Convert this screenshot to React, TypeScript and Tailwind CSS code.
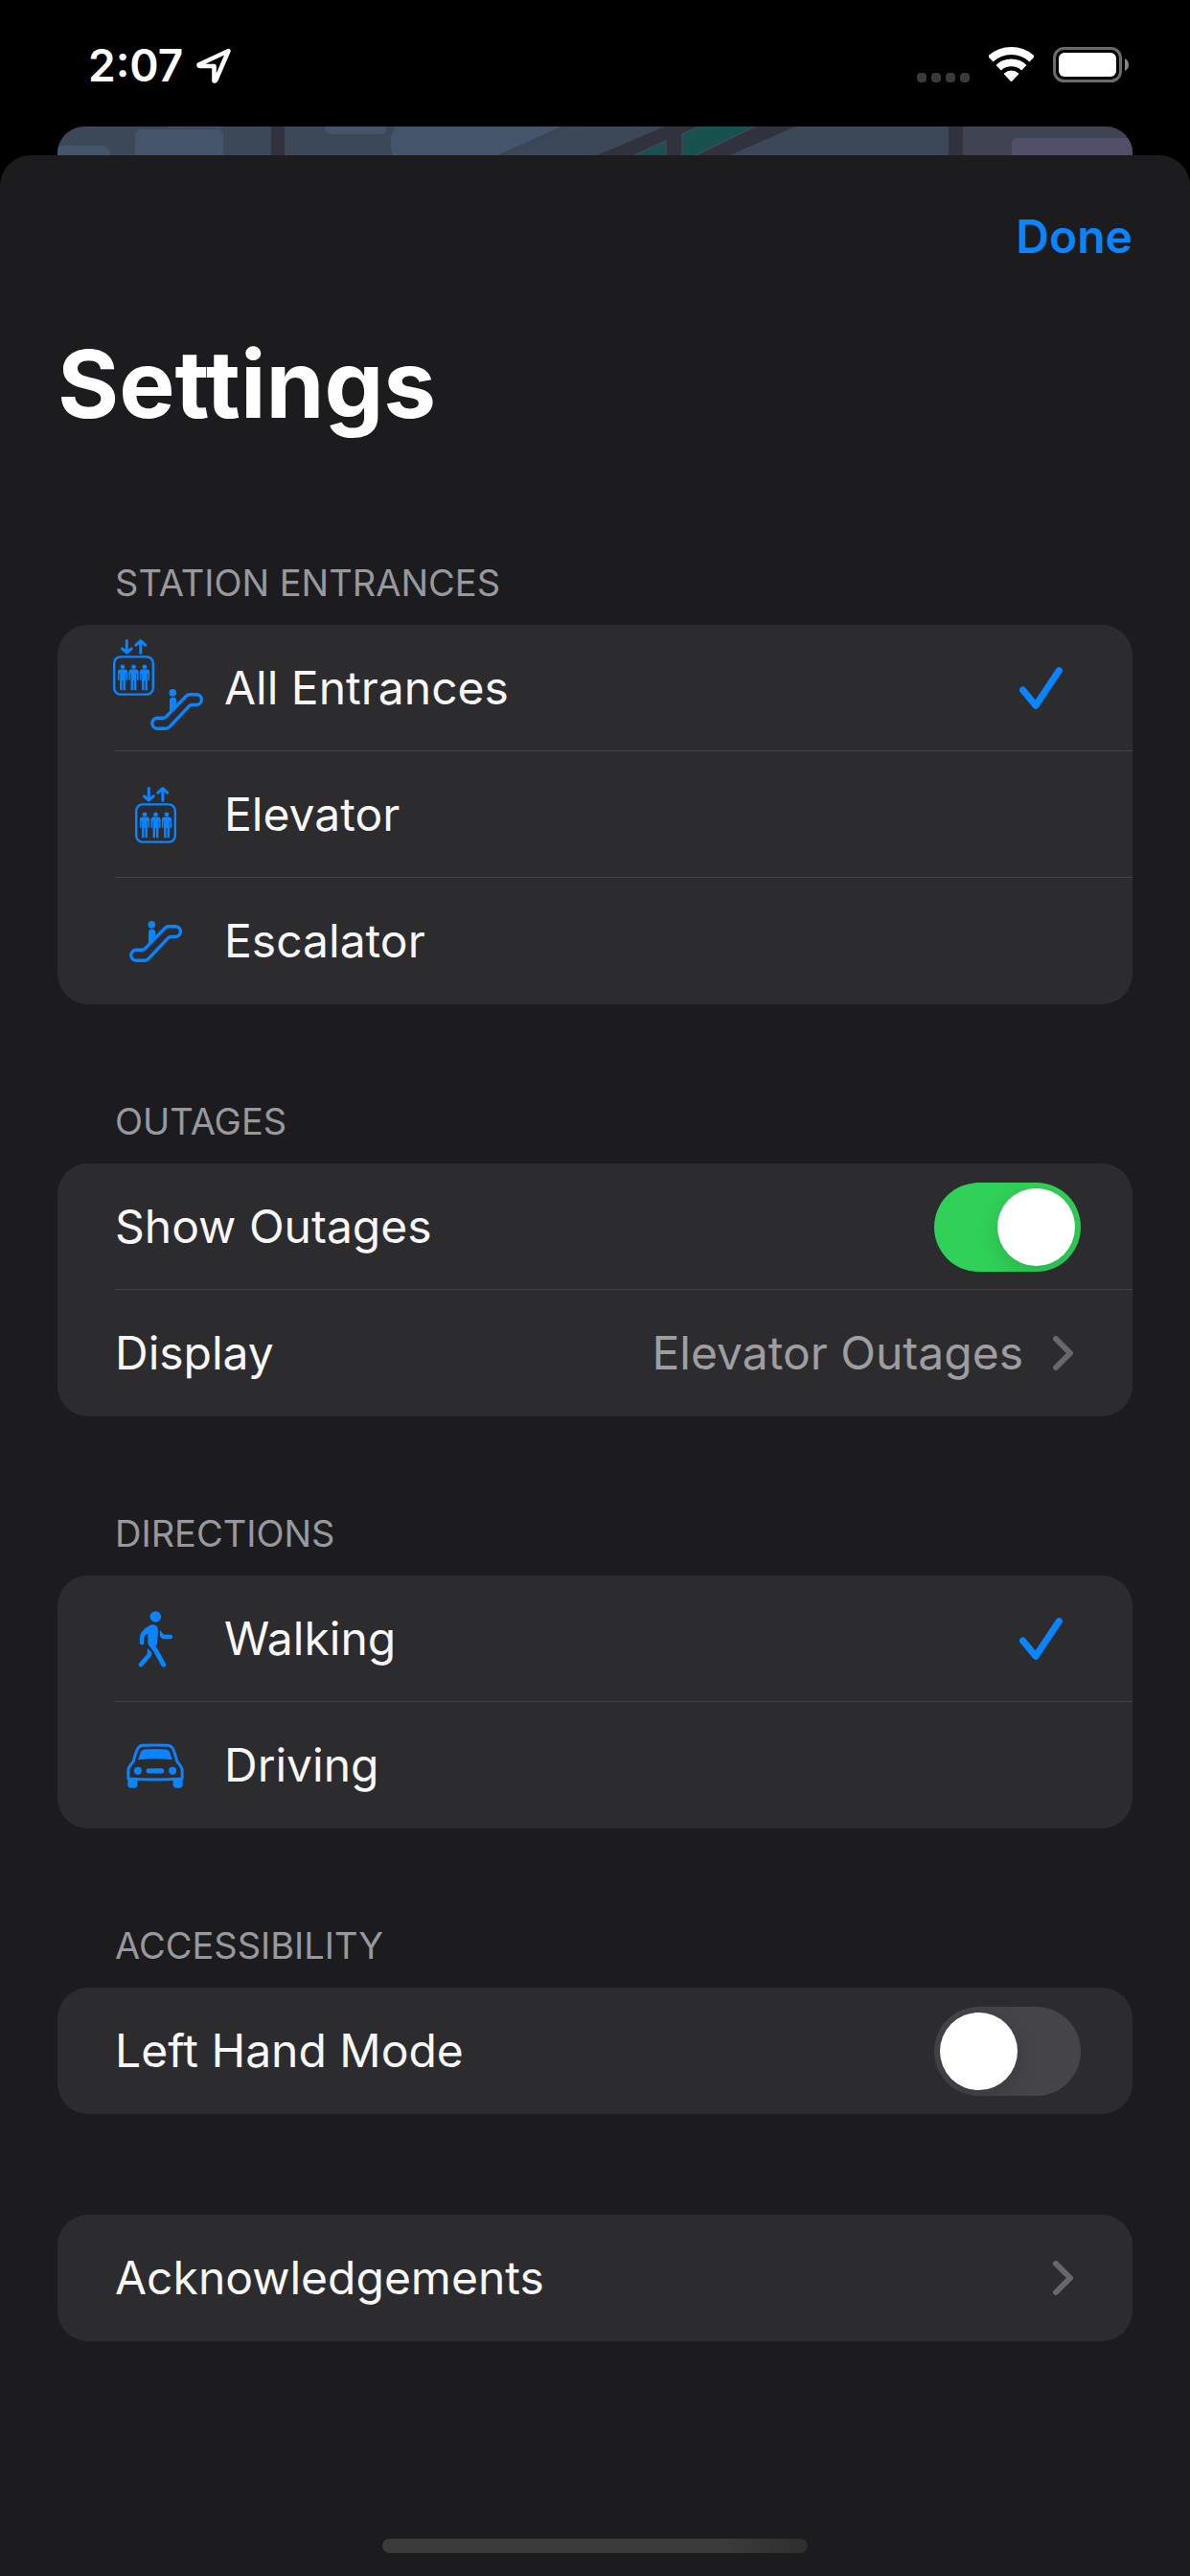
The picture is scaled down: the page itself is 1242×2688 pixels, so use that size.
import React, { useState } from "react";


const ElevatorShape = () => (
    <g>
        <g fill="none" stroke="#0a84ff" strokeWidth="3" strokeLinecap="round" strokeLinejoin="round">
            <path d="M14.3 1.5V14M9.5 9.8L14.3 14.2L19.2 9.8" />
            <path d="M28.8 14.2V2M23.9 6.2L28.8 1.7L33.7 6.2" />
        </g>
        <rect x="1.2" y="18.4" width="40.6" height="39.2" rx="6.5" fill="none" stroke="#0a84ff" strokeWidth="2.4" />
        {[10, 21.5, 33].map((x) => (
            <g key={x} transform={`translate(${x} 0)`} fill="#0a84ff">
                <circle cx="0" cy="28.8" r="2.4" />
                <path d="M-2.5 31.5h5q2.6 0 2.6 2.6v8.6h-1.6v-7h-.6v17.6h-2.4v-10h-1v10h-2.4v-17.6h-.6v7h-1.6v-8.6q0-2.6 2.6-2.6z" />
            </g>
        ))}
    </g>
)

const EscalatorShape = () => (
    <g>
        <circle cx="23.3" cy="3.9" r="3.8" fill="#0a84ff" />
        <path d="M20 12a3.6 3.6 0 0 1 7.2 0v6.5L20 25.5z" fill="#0a84ff" />
        <path
            d="M7.2 30.3H13Q15 30.3 16.4 28.9L37 7.6Q38.8 5.7 41.4 5.7H48a5.4 5.4 0 0 1 0 10.8H43.4Q41.8 16.5 40.6 17.7L20 39.4Q18.2 41.2 15.8 41.2H7.2a5.4 5.4 0 0 1 0-10.9z"
            fill="none"
            stroke="#0a84ff"
            strokeWidth="3.4"
            strokeLinejoin="round"
        />
    </g>
)

const ElevatorIcon = () => (
    <svg className="w-[43px] h-[59px] shrink-0" viewBox="0 0 43 59">
        <ElevatorShape />
    </svg>
)

const EscalatorIcon = () => (
    <svg className="w-[55px] h-[43px] shrink-0" viewBox="0 0 55 43">
        <EscalatorShape />
    </svg>
)

const AllIcon = () => (
    <svg className="w-[100px] h-[102px] shrink-0" viewBox="0 0 100 102">
        <g transform="translate(6 0)"><ElevatorShape /></g>
        <g transform="translate(45 52)"><EscalatorShape /></g>
    </svg>
)

const WalkIcon = () => (
    <svg className="w-[37px] h-[59px] shrink-0" viewBox="130 122 111 177">
        <circle cx="185" cy="140" r="17.5" fill="#0a84ff" />
        <path d="M151 181Q164 165 177 165Q193 166 193 184L191 214Q191 224 187 230L176 238Q162 232 161 222V191L152 201z" fill="#0a84ff" />
        <g fill="none" stroke="#0a84ff" strokeLinecap="round" strokeLinejoin="round">
            <path d="M142 221L143 204Q143 198 147 193L158 181" strokeWidth="14" />
            <path d="M171 226L187 248L210 290" strokeWidth="15" />
            <path d="M166 256Q166 259 163 262L139 290" strokeWidth="14" />
            <path d="M206 200Q208 203 213 203H232" strokeWidth="13" />
        </g>
        <path d="M160 238L174 254L168 266L159 258z" fill="#0a84ff" />
        <path d="M198 181L212 198L207 209L199 202z" fill="#0a84ff" />
    </svg>
)

const CarIcon = () => (
    <svg className="w-[60px] h-[47px] shrink-0" viewBox="98 539 179 140">
        <path
            d="M103.500 649V627Q103.500 616 109 609L117 599Q120 595 121 590L128 567Q134 546 149 545.500Q187 544 226 545.500Q241 546 247 567L254 590Q255 595 258 599L266 609Q271.500 616 271.500 627V649Q187 655 103.500 649z"
            fill="none"
            stroke="#0a84ff"
            strokeWidth="9"
            strokeLinejoin="round"
        />
        <path d="M134 590L142 567Q145 559 153 558Q187 556 222 558Q230 559 233 567L241 590Q187 585 134 590z" fill="#0a84ff" />
        <circle cx="133.500" cy="625" r="12" fill="#0a84ff" />
        <circle cx="241.500" cy="625" r="12" fill="#0a84ff" />
        <rect x="159" y="617" width="56" height="16" rx="8" fill="#0a84ff" />
        <path d="M102 648H132V669Q132 678 123 678H111Q102 678 102 669z" fill="#0a84ff" />
        <path d="M243 648H273V669Q273 678 264 678H252Q243 678 243 669z" fill="#0a84ff" />
    </svg>
)

const Check = () => (
    <svg className="hidden w-[64px] h-[44px] shrink-0 peer-checked:block" viewBox="0 0 64 44">
        <path d="M3.500 24L17 40.300L41.300 3.700" fill="none" stroke="#0a84ff" strokeWidth="7" strokeLinecap="round" strokeLinejoin="round" />
    </svg>
)

const Chevron = () => (
    <svg className="w-8 h-9 shrink-0" viewBox="0 0 32 36">
        <path d="M6 3L21 18L6 33" fill="none" stroke="#68686b" strokeWidth="6" strokeLinecap="round" strokeLinejoin="round" />
    </svg>
)


function StatusBar() {
    return (
        <div className="h-[132px] pl-[92px] pr-[63px] flex items-start justify-between text-white">
            <div className="mt-11 h-12 flex items-center gap-3">
                <span className="text-[46px] leading-[48px] font-semibold">2:07</span>
                <svg className="w-10 h-10" viewBox="0 0 40 40">
                    <path d="M35.500 5L4.500 19.500Q4.500 21 6 21H20.500V36.500Q22 36.500 22.500 35z" fill="none" stroke="#fff" strokeWidth="4.600" strokeLinejoin="round" />
                </svg>
            </div>
            <div className="mt-12 flex items-end gap-5">
                <div className="flex gap-[5px]">
                    <span className="size-[10px] rounded-[4px] bg-[#3a3a3a]"></span>
                    <span className="size-[10px] rounded-[4px] bg-[#3a3a3a]"></span>
                    <span className="size-[10px] rounded-[4px] bg-[#3a3a3a]"></span>
                    <span className="size-[10px] rounded-[4px] bg-[#3a3a3a]"></span>
                </div>
                <svg className="w-[47px] h-[37px]" viewBox="0 0 47 37">
                    <path d="M1.700 12.600A32 32 0 0 1 45.300 12.600" fill="none" stroke="#fff" strokeWidth="8" />
                    <path d="M10.200 21.700A19.500 19.500 0 0 1 36.800 21.700" fill="none" stroke="#fff" strokeWidth="7.700" />
                    <path d="M23.500 36L16 28A11 11 0 0 1 31 28z" fill="#fff" stroke="#fff" strokeWidth="1" strokeLinejoin="round" />
                </svg>
                <svg className="w-[80px] h-[38px]" viewBox="0 0 80 38">
                    <rect x="1.500" y="2.500" width="69" height="34" rx="10" fill="none" stroke="#6b6b6b" strokeWidth="3" />
                    <rect x="6" y="7" width="60" height="25" rx="6" fill="#fff" />
                    <path d="M75 13Q79 15 79 19.500Q79 24 75 26z" fill="#868686" />
                </svg>
            </div>
        </div>
    )
}

// top edge of the map that stays visible behind the sheet
function MapStrip() {
    return (
        <div className="mx-[60px] h-[30px] rounded-t-[28px] overflow-hidden bg-[#3c4858]">
            <svg className="w-full h-full" viewBox="0 0 1122 30" preserveAspectRatio="none">
                <g fill="#44546a">
                    <path d="M0 20H50L55 25V30H0z" />
                    <path d="M81 7L85 3H169L173 7V30H81z" />
                    <rect x="116" y="0" width="54" height="1.500" />
                    <path d="M279 0H343V3Q342 8 336 8H286Q280 7 279 3z" />
                    <path d="M353 0L348 10V22L350 30H459L530 0z" />
                </g>
                <path d="M459 30L526 0H535L470 30z" fill="#3a4557" />
                <rect x="223" y="0" width="14" height="30" fill="#30333d" />
                <path d="M563 30L634 0H770L702 30z" fill="#30333d" />
                <g fill="#17524f" stroke="#41475a" strokeWidth="1.500">
                    <path d="M600 31L635 15V31z" />
                    <path d="M652 31V8L672 -1H730L664 31z" />
                </g>
                <rect x="930" y="0" width="15" height="30" fill="#30333d" />
                <rect x="945" y="0" width="177" height="30" fill="#404450" />
                <path d="M996 30V16L1000 12H1122V30z" fill="#525069" />
            </svg>
        </div>
    )
}

function Section({ title, children }: { title?: string; children: React.ReactNode }) {
    return (
        <section>
            {title && <h2 className="mb-5 px-[60px] text-[38px] leading-[48px] text-[#98989f]">{title}</h2>}
            <div className="rounded-[32px] bg-[#2c2c2e] text-[#f7f7f7]">{children}</div>
        </section>
    )
}

const Divider = () => <div className="-mt-px ml-[60px] h-px bg-[#434346]"></div>

type ChoiceProps = {
    group: string
    label: string
    icon: React.ReactNode
    value: string
    onPick: (label: string) => void
}

function Choice({ group, label, icon, value, onPick }: ChoiceProps) {
    return (
        <label className="relative h-[132px] pl-[60px] pr-[54px] flex items-center cursor-pointer">
            <input type="radio" name={group} checked={value === label} onChange={() => onPick(label)} className="peer sr-only" />
            <span className="w-[84px] mr-[30px] flex justify-center">{icon}</span>
            <span className="flex-1 text-[48px] leading-[60px]">{label}</span>
            <Check />
        </label>
    )
}

function Toggle({ label, on, onChange }: { label: string; on: boolean; onChange: (on: boolean) => void }) {
    return (
        <label className="h-[132px] pl-[60px] pr-[54px] flex items-center justify-between cursor-pointer">
            <span className="text-[48px] leading-[60px]">{label}</span>
            <input
                type="checkbox"
                checked={on}
                onChange={(e) => onChange(e.target.checked)}
                className="appearance-none w-[153px] h-[93px] p-[6px] shrink-0 rounded-full overflow-hidden flex bg-[#454449] checked:bg-[#30d158] checked:justify-end before:content-[''] before:size-[81px] before:rounded-full before:bg-white before:shadow-[0_8px_24px_rgba(0,0,0,0.15)]"
            />
        </label>
    )
}

function LinkRow({ label, value }: { label: string; value?: string }) {
    return (
        <button className="w-full h-[132px] pl-[60px] pr-[54px] flex items-center text-[48px] leading-[60px] cursor-pointer">
            <span className="flex-1 text-left">{label}</span>
            {value && <span className="mr-7 text-[#9e9ea1]">{value}</span>}
            <Chevron />
        </button>
    )
}


function App() {
    const [entrance, setEntrance] = useState("All Entrances")
    const [mode, setMode] = useState("Walking")
    const [outages, setOutages] = useState(true)
    const [leftHand, setLeftHand] = useState(false)

    return (
        <div className="min-h-screen flex flex-col bg-black font-['Inter',sans-serif]">
            <StatusBar />
            <MapStrip />
            <main className="flex-1 px-[60px] flex flex-col rounded-t-[32px] bg-[#1c1c1e]">
                <button className="self-end mt-[55px] text-[48px] leading-[60px] font-semibold text-[#0a84ff] cursor-pointer">Done</button>
                <h1 className="mt-16 text-[98px] leading-[120px] font-bold text-white">Settings</h1>

                <div className="mt-[123px] flex flex-col gap-[98px]">
                    <Section title="STATION ENTRANCES">
                        <Choice group="entrance" label="All Entrances" icon={<AllIcon />} value={entrance} onPick={setEntrance} />
                        <Divider />
                        <Choice group="entrance" label="Elevator" icon={<ElevatorIcon />} value={entrance} onPick={setEntrance} />
                        <Divider />
                        <Choice group="entrance" label="Escalator" icon={<EscalatorIcon />} value={entrance} onPick={setEntrance} />
                    </Section>

                    <Section title="OUTAGES">
                        <Toggle label="Show Outages" on={outages} onChange={setOutages} />
                        <Divider />
                        <LinkRow label="Display" value="Elevator Outages" />
                    </Section>

                    <Section title="DIRECTIONS">
                        <Choice group="mode" label="Walking" icon={<WalkIcon />} value={mode} onPick={setMode} />
                        <Divider />
                        <Choice group="mode" label="Driving" icon={<CarIcon />} value={mode} onPick={setMode} />
                    </Section>

                    <Section title="ACCESSIBILITY">
                        <Toggle label="Left Hand Mode" on={leftHand} onChange={setLeftHand} />
                    </Section>
                </div>

                <div className="mt-[105px]">
                    <Section>
                        <LinkRow label="Acknowledgements" />
                    </Section>
                </div>

                <div className="mt-auto mb-6 self-center w-[444px] h-[15px] rounded-full bg-linear-to-r from-[#3b3b3b] from-80% to-[#2e2e2e]"></div>
            </main>
        </div>
    )
}

export default App
